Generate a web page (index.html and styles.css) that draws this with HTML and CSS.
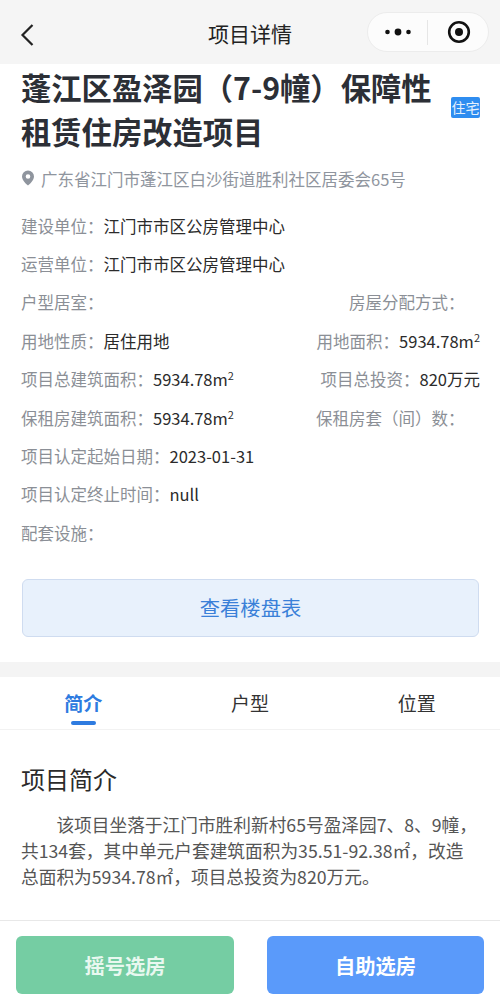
FILE: index.html
```html
<!DOCTYPE html>
<html lang="zh-CN">
<head>
<meta charset="utf-8">
<title>项目详情</title>
<link rel="stylesheet" href="styles.css">
</head>
<body>
<div class="page">
  <header class="nav">
    <svg class="back" width="14" height="24" viewBox="0 0 14 24"><path d="M12.5 2 2.500 12l10 10" fill="none" stroke="#222" stroke-width="2.200"/></svg>
    <div class="nav-title">项目详情</div>
    <div class="capsule">
      <div class="capsule-cell capsule-more">
        <svg width="28" height="10" viewBox="0 0 28 10"><circle cx="3.500" cy="5" r="2.300" fill="#111"/><circle cx="14" cy="5" r="3.400" fill="#111"/><circle cx="24.500" cy="5" r="2.300" fill="#111"/></svg>
      </div>
      <div class="capsule-line"></div>
      <div class="capsule-cell capsule-close">
        <svg width="24" height="24" viewBox="0 0 24 24"><circle cx="12" cy="12" r="9.800" fill="none" stroke="#111" stroke-width="2.600"/><circle cx="12" cy="12" r="4" fill="#111"/></svg>
      </div>
    </div>
  </header>
  <main class="main">
    <section class="info">
      <div class="head">
        <h1 class="title">蓬江区盈泽园（7-9幢）保障性租赁住房改造项目</h1>
        <span class="badge">住宅</span>
      </div>
      <div class="address">
        <svg width="14" height="16" viewBox="0 0 14 16"><path fill-rule="evenodd" d="M7 .5a6 6 0 0 1 6 6c0 3.600-4 7.500-6 9-2-1.500-6-5.400-6-9a6 6 0 0 1 6-6Zm0 3.700a2.300 2.300 0 1 0 0 4.600 2.300 2.300 0 0 0 0-4.600Z" fill="#8f959e"/></svg>
        <span>广东省江门市蓬江区白沙街道胜利社区居委会65号</span>
      </div>
      <div class="rows">
        <div class="row"><div class="cell"><span class="label">建设单位：</span><span class="value">江门市市区公房管理中心</span></div></div>
        <div class="row"><div class="cell"><span class="label">运营单位：</span><span class="value">江门市市区公房管理中心</span></div></div>
        <div class="row"><div class="cell"><span class="label">户型居室：</span></div><div class="cell"><span class="label">房屋分配方式：</span><span class="value empty"></span></div></div>
        <div class="row"><div class="cell"><span class="label">用地性质：</span><span class="value">居住用地</span></div><div class="cell"><span class="label">用地面积：</span><span class="value">5934.78m<sup>2</sup></span></div></div>
        <div class="row"><div class="cell"><span class="label">项目总建筑面积：</span><span class="value">5934.78m<sup>2</sup></span></div><div class="cell"><span class="label">项目总投资：</span><span class="value">820万元</span></div></div>
        <div class="row"><div class="cell"><span class="label">保租房建筑面积：</span><span class="value">5934.78m<sup>2</sup></span></div><div class="cell"><span class="label">保租房套（间）数：</span><span class="value empty"></span></div></div>
        <div class="row"><div class="cell"><span class="label">项目认定起始日期：</span><span class="value">2023-01-31</span></div></div>
        <div class="row"><div class="cell"><span class="label">项目认定终止时间：</span><span class="value">null</span></div></div>
        <div class="row"><div class="cell"><span class="label">配套设施：</span></div></div>
      </div>
      <button class="table-btn">查看楼盘表</button>
    </section>
    <nav class="tabs">
      <div class="tab active">简介</div>
      <div class="tab">户型</div>
      <div class="tab">位置</div>
    </nav>
    <section class="intro">
      <h2 class="intro-title">项目简介</h2>
      <p class="intro-text">该项目坐落于江门市胜利新村65号盈泽园7、8、9幢，共134套，其中单元户套建筑面积为35.51-92.38㎡，改造总面积为5934.78㎡，项目总投资为820万元。</p>
    </section>
  </main>
  <footer class="footer">
    <button class="action action-green">摇号选房</button>
    <button class="action action-blue">自助选房</button>
  </footer>
</div>
</body>
</html>
```

FILE: styles.css
```css
* { box-sizing: border-box; }
html, body { margin: 0; padding: 0; background: #fff; }
body { font-family: "Noto Sans CJK SC", "Noto Sans", sans-serif; }
.page { width: 500px; height: 1000px; display: flex; flex-direction: column; overflow: hidden; }

.nav { height: 64px; flex: none; background: #f5f5f5; display: flex; align-items: center; position: relative; padding: 6px 11px 0 20px; justify-content: space-between; }
.back { display: block; }
.nav-title { position: absolute; left: 0; right: 0; top: 13px; text-align: center; font-size: 21px; line-height: 40px; color: #222; }
.capsule { position: relative; width: 122px; height: 40px; border: 1px solid #ececec; border-radius: 20px; background: #fcfcfc; display: flex; align-items: center; margin-top: -6px; }
.capsule-cell { display: flex; align-items: center; justify-content: center; }
.capsule-more { width: 59px; }
.capsule-close { flex: 1; padding-left: 2px; }
.capsule-cell svg { display: block; }
.capsule-line { width: 1px; height: 25px; background: #e6e6e6; }

.main { flex: 1; min-height: 0; overflow: hidden; }
.info { padding: 1px 20px 25px 21px; }
.head { display: flex; align-items: center; justify-content: space-between; }
.title { margin: 0; width: 420px; font-size: 30.300px; line-height: 44px; font-weight: 700; color: #2c2f36; }
.badge { width: 29px; height: 21px; margin-top: -3px; background: #2f8df0; border-radius: 2px; color: #e4f0fd; font-size: 14px; line-height: 21px; text-align: center; white-space: nowrap; letter-spacing: 0; }
.address { display: flex; align-items: center; gap: 6px; margin-top: 13px; height: 26px; font-size: 16.500px; color: #8f959e; }
.address svg { display: block; margin-top: -2px; }
.rows { margin-top: 14.500px; }
.row { display: flex; justify-content: space-between; height: 38.400px; align-items: center; font-size: 16.500px; line-height: 24px; }
.cell { display: flex; align-items: center; white-space: nowrap; }
.label { color: #8b8f96; }
.value { color: #2b2b2b; }
.value.empty { width: 15.500px; }
.value sup { font-size: 11px; line-height: 0; vertical-align: 6px; }
.table-btn { display: block; width: 457px; height: 58px; margin: 26.500px 0 0 1px; border: 1px solid #cfdcf0; border-radius: 6px; background: #e8f1fc; color: #3a80d8; font: 20.300px/1 "Noto Sans CJK SC", sans-serif; }

.tabs { display: flex; background: #fff; border-top: 15px solid #f4f4f4; border-bottom: 1px solid #f2f2f2; height: 68px; }
.tab { flex: 1; position: relative; text-align: center; font-size: 19px; line-height: 52px; color: #333; }
.tab.active { color: #2e7be0; font-weight: 700; }
.tab.active::after { content: ""; position: absolute; left: 71px; bottom: 4px; width: 25px; height: 4px; border-radius: 2px; background: #2e7be0; }

.intro { padding: 29px 20px 0 21px; }
.intro-title { margin: 0; font-size: 24px; line-height: 40px; font-weight: 400; color: #2b2b2b; }
.intro-text { margin: 12px 0 0; font-size: 17.700px; line-height: 26px; text-indent: 2em; color: #555; }

.footer { flex: none; height: 80px; padding: 15px 16px 6px; border-top: 1px solid #e8e8e8; display: flex; justify-content: space-between; background: #fff; }
.action { height: 58px; width: 218px; border: 0; border-radius: 6px; color: #fff; font: 700 20.300px/1 "Noto Sans CJK SC", sans-serif; }
.action-green { background: #75cda3; color: #e9f8f0; }
.action-blue { background: #5a9afa; width: 217px; }
```
